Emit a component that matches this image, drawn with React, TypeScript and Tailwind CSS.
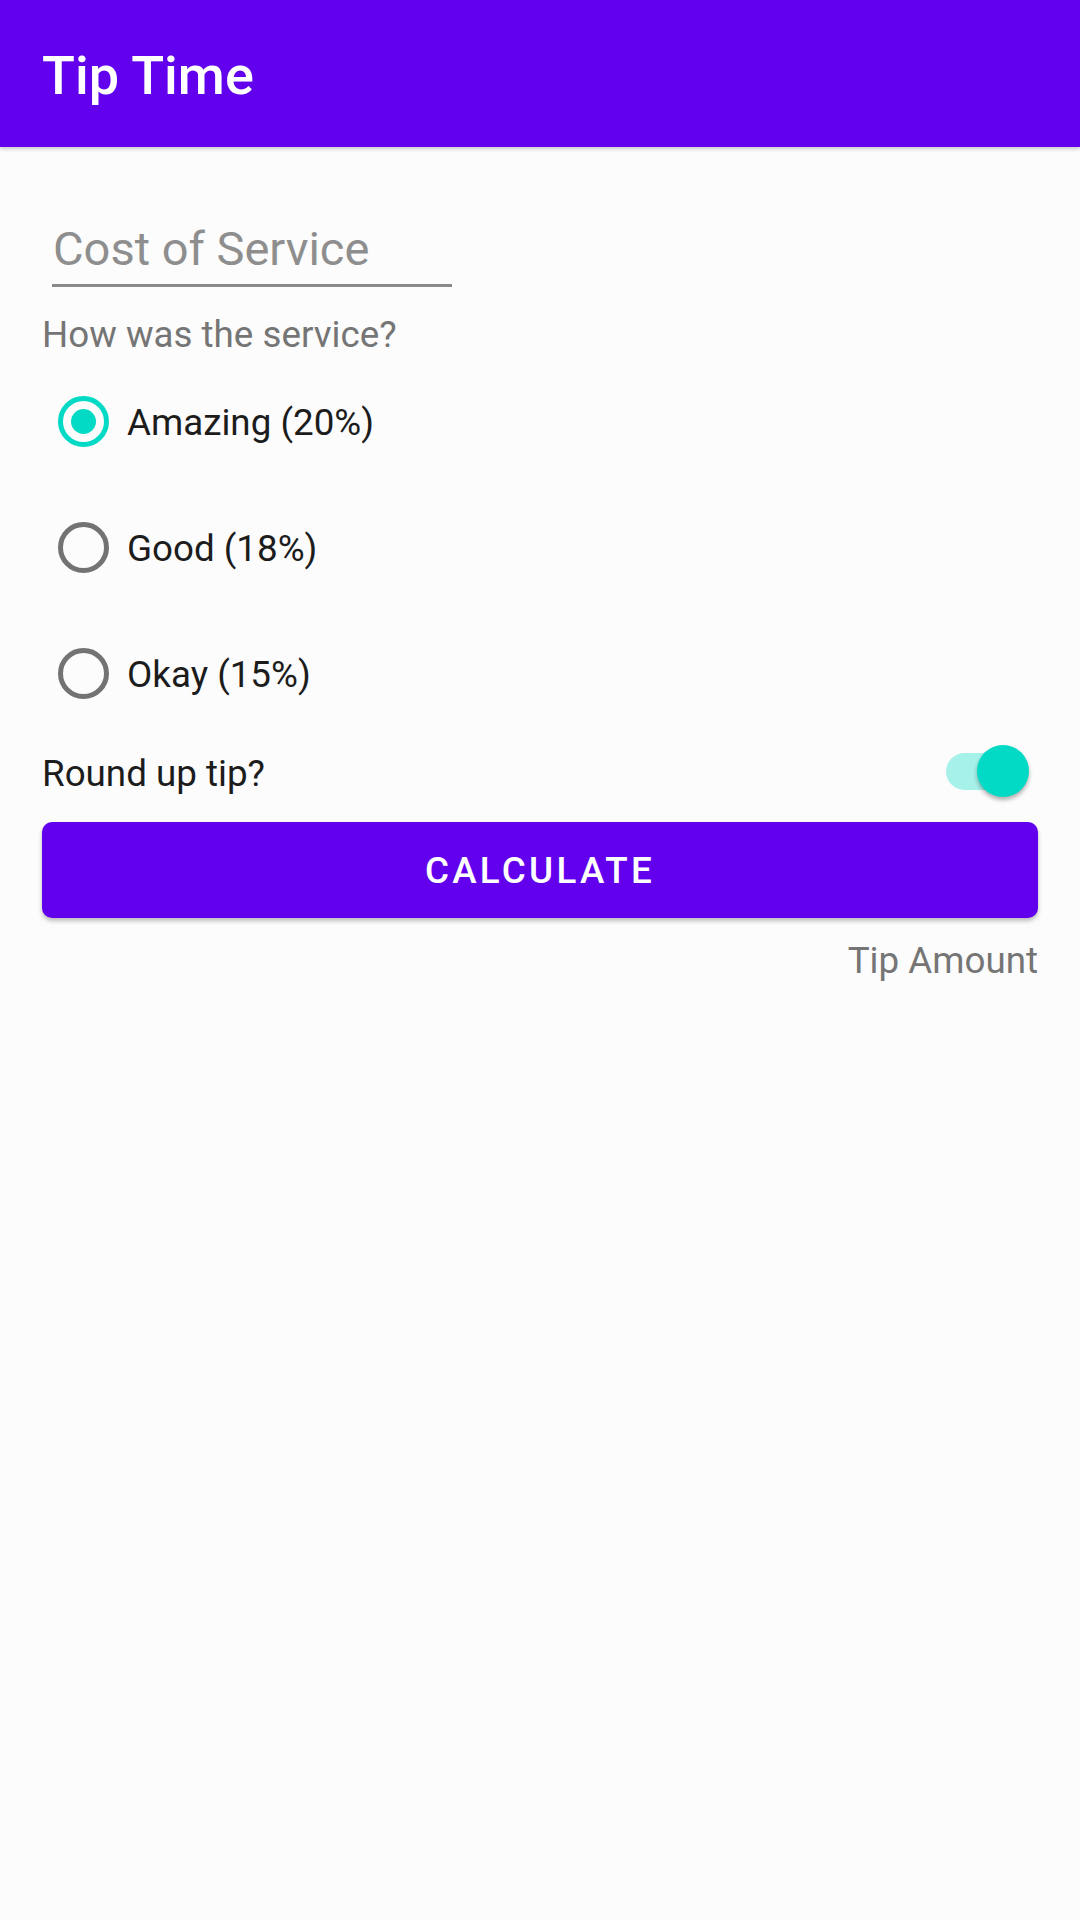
import React, { useState } from 'react';

const options = [
  { id: 'amazing', label: 'Amazing (20%)' },
  { id: 'good', label: 'Good (18%)' },
  { id: 'okay', label: 'Okay (15%)' },
];

const RadioRow: React.FC<{ label: string; checked: boolean; onSelect: () => void }> = ({
  label,
  checked,
  onSelect,
}) => (
  <div className="flex h-[126px] items-center cursor-pointer" onClick={onSelect}>
    <div
      className={`ml-[16px] flex h-[51px] w-[51px] items-center justify-center rounded-full border-[5px] ${
        checked ? 'border-[#03dac5]' : 'border-[#737373]'
      }`}
    >
      {checked && <div className="h-[25px] w-[25px] rounded-full bg-[#03dac5]" />}
    </div>
    <span className="ml-[18px] pt-[3px] text-[36.75px] leading-[43px] text-[#1c1c1c]">{label}</span>
  </div>
);

export default function App() {
  const [selected, setSelected] = useState('amazing');
  const [roundUp, setRoundUp] = useState(true);

  return (
    <div
      className="min-h-[1920px] w-[1080px] bg-[#fcfcfc]"
      style={{ fontFamily: 'Roboto, "Noto Sans", sans-serif' }}
    >
      <header className="flex h-[147px] items-center bg-[#6200ee] pl-[42px] pt-[5px] shadow-[0_2px_4px_rgba(0,0,0,0.2)]">
        <h1 className="text-[54px] font-medium leading-none text-white">Tip Time</h1>
      </header>

      <main className="flex flex-col px-[42px]">
        <div className="ml-[10px] mt-[74px] w-[400px] border-b-[3px] border-[#8a8a8a] pb-[7px]">
          <div className="pl-[1px] text-[47px] leading-[56px] text-[#8e8e8e]">Cost of Service</div>
        </div>

        <p className="mt-[26px] text-[36.75px] leading-[43px] text-[#757575]">How was the service?</p>

        <div className="mt-[2px] flex flex-col">
          {options.map((o) => (
            <RadioRow
              key={o.id}
              label={o.label}
              checked={selected === o.id}
              onSelect={() => setSelected(o.id)}
            />
          ))}
        </div>

        <div className="flex h-[70px] items-center justify-between">
          <span className="pt-[5px] text-[36.75px] leading-[43px] text-[#1c1c1c]">Round up tip?</span>
          <div className="relative h-[52px] w-[92px] cursor-pointer" onClick={() => setRoundUp(!roundUp)}>
            <div
              className={`absolute left-0 top-[7.5px] h-[37px] w-[78px] rounded-full ${
                roundUp ? 'bg-[#a6f1e9]' : 'bg-[#bdbdbd]'
              }`}
            />
            <div
              className={`absolute top-0 h-[52px] w-[52px] rounded-full shadow-[0_3px_4px_rgba(0,0,0,0.3)] ${
                roundUp ? 'left-[31px] bg-[#03dac5]' : 'left-[-6px] bg-[#f1f1f1]'
              }`}
            />
          </div>
        </div>

        <button className="mt-[16px] flex h-[96px] w-full items-center justify-center rounded-[10px] bg-[#6200ee] shadow-[0_3px_4px_rgba(0,0,0,0.25)]">
          <span className="text-[36.75px] font-medium leading-[43px] tracking-[3.3px] text-white">CALCULATE</span>
        </button>

        <p className="mt-[21px] text-right text-[36.75px] leading-[43px] text-[#757575]">Tip Amount</p>
      </main>
    </div>
  );
}
